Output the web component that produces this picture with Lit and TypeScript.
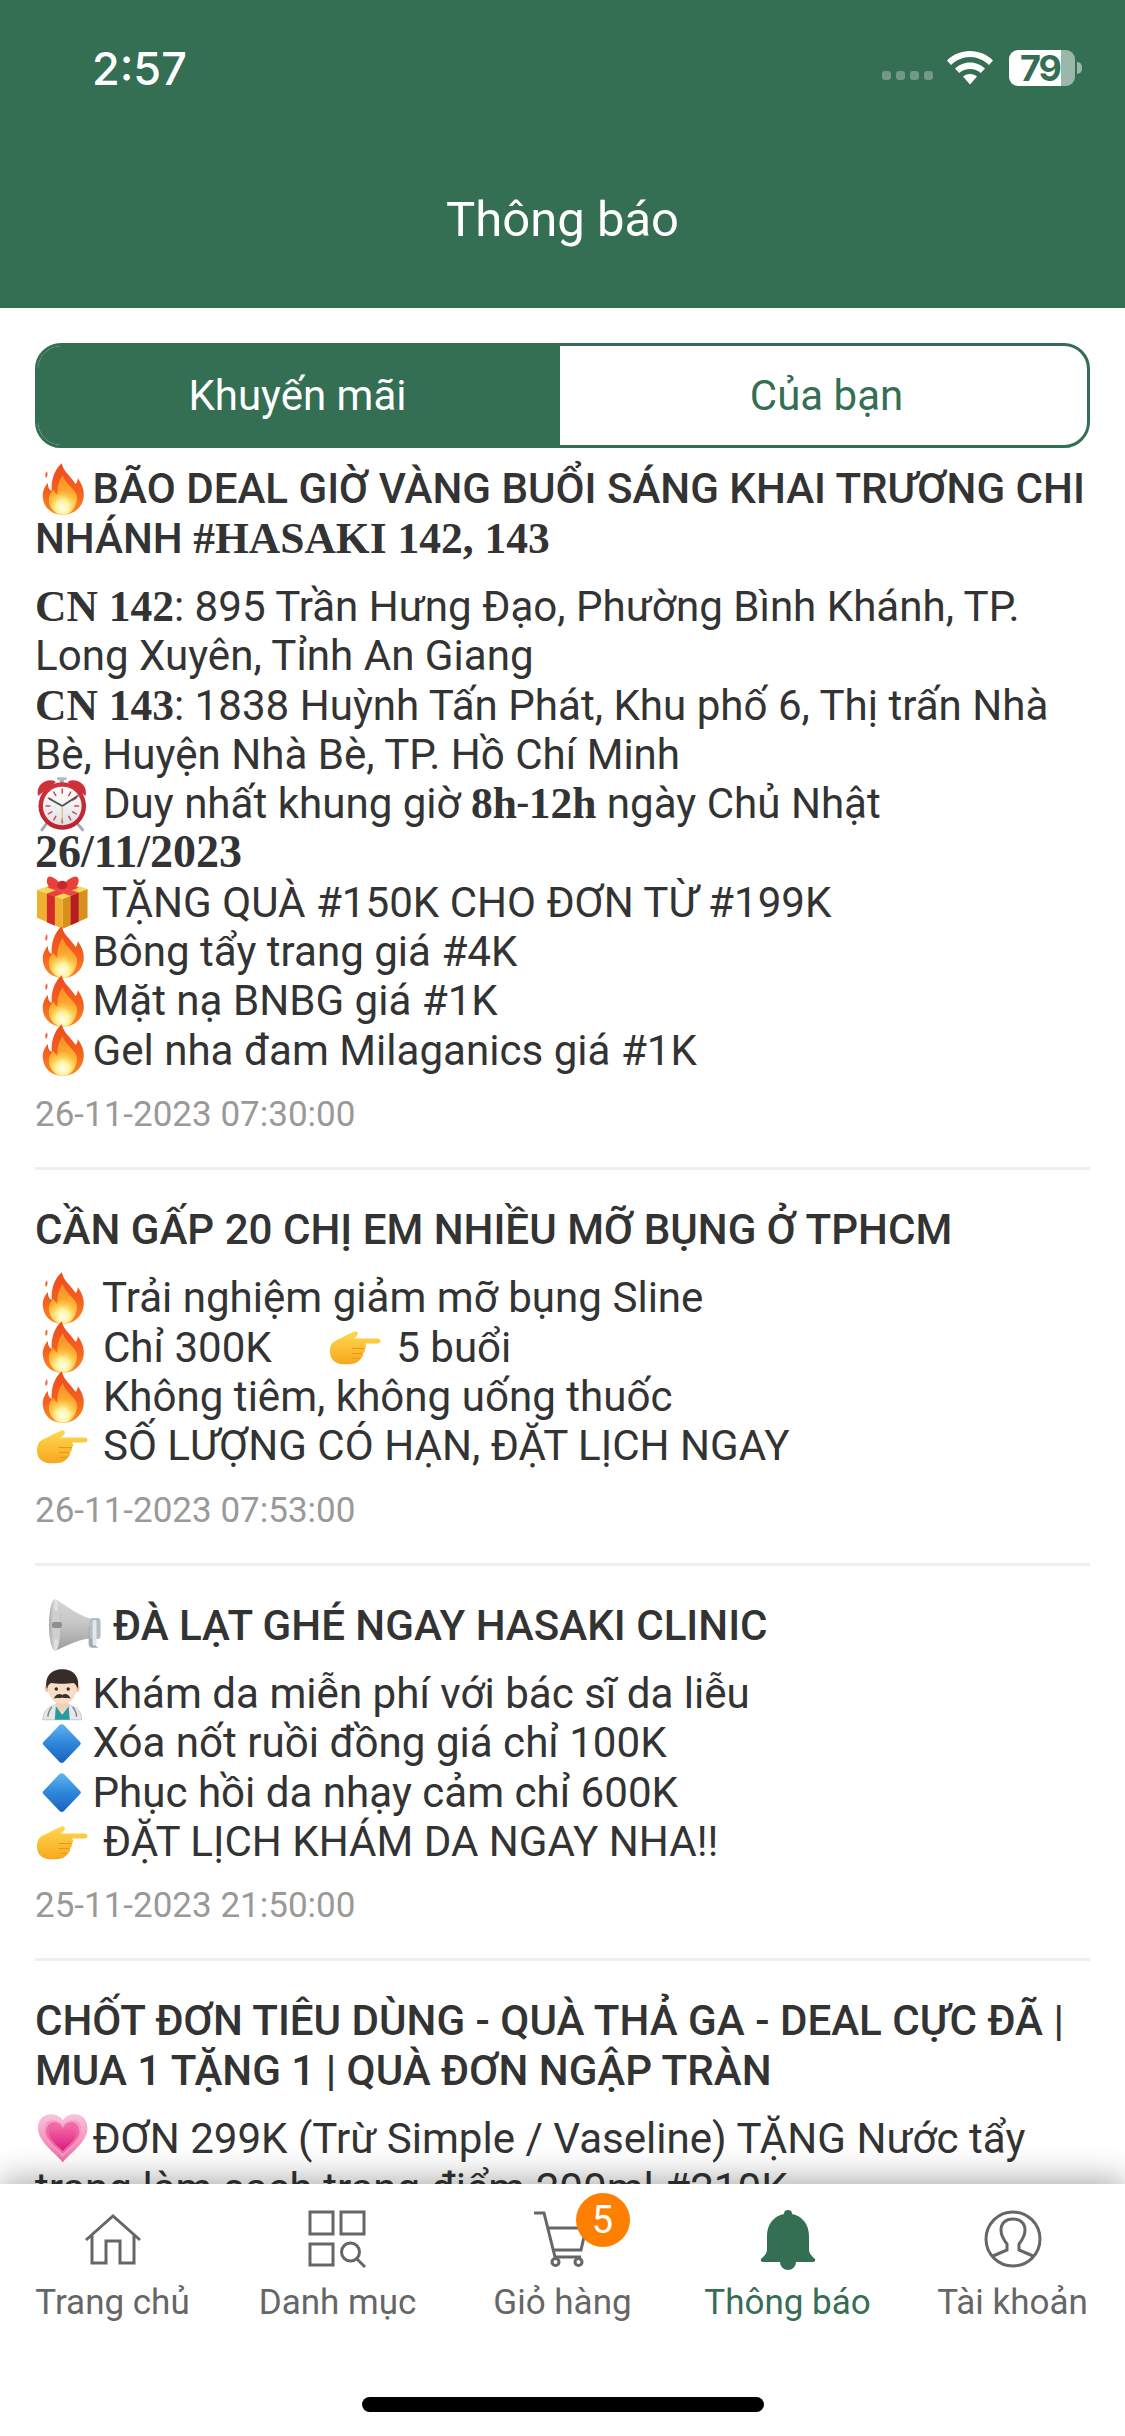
import { LitElement, html, css, svg } from 'lit';
import { customElement } from 'lit/decorators.js';

const emojiArt: Record<string, unknown> = {
  fire: svg`
    <defs>
      <linearGradient id="fa" x1="0" y1="0" x2="0" y2="1"><stop offset="0" stop-color="#ee4a1e"/><stop offset=".55" stop-color="#f4601f"/><stop offset="1" stop-color="#fb8a22"/></linearGradient>
      <linearGradient id="fb" x1="0" y1="0" x2="0" y2="1"><stop offset="0" stop-color="#f98a25"/><stop offset=".7" stop-color="#fdbb35"/><stop offset="1" stop-color="#ffe27a"/></linearGradient>
      <radialGradient id="fc" cx=".5" cy=".75" r=".6"><stop offset="0" stop-color="#fffff0"/><stop offset=".4" stop-color="#fff29a"/><stop offset="1" stop-color="#ffc43d" stop-opacity="0"/></radialGradient>
    </defs>
    <path fill="url(#fa)" d="M27 3C29 12 36 16 41 24C43 22 43 20 43 18C48 25 50 31 49 38C47 49 38 55 28 55C17 55 9 48 8 38C7 32 10 26 13 23C13 27 14 30 17 31C16 21 19 10 27 3Z"/>
    <path fill="#f0692a" d="M12 11C13 14 13 16 11 18C10 15 10 13 12 11Z"/>
    <path fill="url(#fb)" d="M28 15C30 23 38 27 42 35C44 44 37 53 28 53C20 53 14 47 14 40C14 35 16 32 19 30C20 33 21 34 23 35C22 27 24 21 28 15Z"/>
    <ellipse cx="28" cy="40" rx="14" ry="15" fill="url(#fc)"/>`,
  clock: svg`
    <defs>
      <radialGradient id="ca" cx=".5" cy=".4" r=".6"><stop offset="0" stop-color="#e8535a"/><stop offset="1" stop-color="#b81f2c"/></radialGradient>
      <linearGradient id="cb" x1="0" y1="0" x2="0" y2="1"><stop offset="0" stop-color="#fff"/><stop offset="1" stop-color="#dfe1e4"/></linearGradient>
    </defs>
    <path d="M13 47L7 55M41 47L48 55" stroke="#a5a8ac" stroke-width="3" stroke-linecap="round"/>
    <path d="M27 4V10" stroke="#a5a8ac" stroke-width="4"/>
    <rect x="22" y="2" width="10" height="3" rx="1.500" fill="#b5b8bc"/>
    <path fill="#d22f3b" d="M3 21C1 12 7 5 16 5C19 5 20 6 21 7Z"/>
    <path fill="#d22f3b" d="M51 21C53 12 47 5 38 5C35 5 34 6 33 7Z"/>
    <circle cx="27.500" cy="31" r="24" fill="url(#ca)"/>
    <circle cx="27.500" cy="31" r="19.500" fill="url(#cb)"/>
    <g stroke="#dd4a55" stroke-width="1.600" stroke-linecap="round">
      <path d="M27.500 14V18M27.500 44V48M11 31H15M40 31H44M19 17L21 20.500M36 17L34 20.500M13.500 23L17 25M41.500 23L38 25M13.500 39L17 37M41.500 39L38 37M19 45L21 41.500M36 45L34 41.500"/>
    </g>
    <path d="M27.500 31L15 24M27.500 31L43 21" stroke="#4b4e55" stroke-width="1.800" stroke-linecap="round"/>
    <path d="M27.500 31V46" stroke="#d9b56a" stroke-width="1"/>`,
  gift: svg`
    <path fill="#f9d65a" d="M2 17L28 8L53 16L28 26Z"/>
    <path fill="#eeb030" d="M2 17L28 26V56L2 45Z"/>
    <path fill="#d8901a" d="M28 26L53 16V45L28 56Z"/>
    <path fill="#d42a2c" d="M12 20.500L20 23.500V53L12 49.500Z"/>
    <path fill="#b71c24" d="M36 23L44 19.500V49L36 52.500Z"/>
    <path fill="#e5403a" d="M12 20.500L20 23.500L44 14.500L36 11.500Z"/>
    <path fill="#ea4a42" d="M36 23L44 19.500L20 11L12 14Z"/>
    <path fill="#e8413b" d="M26 11C21 5 15 2 13 4C11 7 12 12 15 14C19 16 23 15 27 13ZM29 11C34 5 41 2 43 4C45 7 44 12 41 14C37 16 33 15 29 13Z"/>
    <ellipse cx="27.500" cy="12" rx="5" ry="4.500" fill="#c9272d"/>`,
  hand: svg`
    <defs><linearGradient id="ha" x1="0" y1="0" x2="0" y2="1"><stop offset="0" stop-color="#ffd84f"/><stop offset="1" stop-color="#f6a81f"/></linearGradient></defs>
    <g transform="translate(0 2.500)">
      <path fill="url(#ha)" d="M2 31C2 24 5 21 10 19C16 16 21 13 26 11C29 10 31 12 30 14C29 16 27 17 26 18H50C54 18 54 23 50 23H37C39 24 39 27 37 28C38 30 37 32 35 33C36 35 35 37 33 38C31 42 27 44 18 44C8 44 2 40 2 31Z"/>
      <path d="M24 28H37M24 33H35M25 38H33" stroke="#e6951a" stroke-width="1" fill="none"/>
    </g>`,
  megaphone: svg`
    <defs>
      <linearGradient id="ma" x1="0" y1="0" x2="0" y2="1"><stop offset="0" stop-color="#d4d4d4"/><stop offset=".45" stop-color="#c8c8c8"/><stop offset="1" stop-color="#9c9c9c"/></linearGradient>
      <linearGradient id="mb" x1="0" y1="0" x2="1" y2="0"><stop offset="0" stop-color="#a9a9a9"/><stop offset=".6" stop-color="#e6e6e6"/><stop offset="1" stop-color="#bdbdbd"/></linearGradient>
    </defs>
    <path fill="url(#ma)" d="M10 3C16 5 30 18 47 23V42C30 44 16 53 10 55Z"/>
    <ellipse cx="10" cy="29" rx="6" ry="26" fill="url(#mb)"/>
    <ellipse cx="11" cy="29" rx="4" ry="15" fill="#cfcfcf"/>
    <rect x="7" y="26" width="10" height="6" rx="2" fill="#8f8f8f"/>
    <path d="M44 30H51V48C51 50 52 51 54 52H47C45 52 44 50 44 48Z" fill="#a4a9ae"/>
    <rect x="45" y="22" width="11" height="21" rx="3" fill="#b4bcc4"/>
    <rect x="48" y="24" width="4" height="26" rx="2" fill="#e2e8ed"/>`,
  doctor: svg`
    <path fill="#e6e8ea" stroke="#c4c8cc" stroke-width="1" d="M8 55C8 47 12 43 20 40H35C43 43 47 47 47 55Z"/>
    <path fill="#2a9aa3" d="M21 41L27.500 50L34 41L35 55H20Z"/>
    <path fill="#f3cfb4" d="M21 34H34V41L27.500 48L21 41Z"/>
    <path d="M17 42C14 46 13 49 13 52M38 42C41 46 42 49 42 52" stroke="#7f868d" stroke-width="1.500" fill="none"/>
    <ellipse cx="12.500" cy="23" rx="2.500" ry="4" fill="#efc3a6"/>
    <ellipse cx="42.500" cy="23" rx="2.500" ry="4" fill="#efc3a6"/>
    <ellipse cx="27.500" cy="23" rx="14.500" ry="16" fill="#f9dcc6"/>
    <path fill="#372c29" d="M12 24C9 11 17 4 27.500 4C38 4 46 11 43 24C42 21 41 19 39 18C32 19 23 19 16 18C14 19 13 21 12 24Z"/>
    <circle cx="21.500" cy="24" r="1.700" fill="#332a28"/>
    <circle cx="33.500" cy="24" r="1.700" fill="#332a28"/>
    <path fill="#3f302b" d="M27.500 30C25 28 21 29 19 33.500C23 32.500 26 33.500 27.500 32.500C29 33.500 32 32.500 36 33.500C34 29 30 28 27.500 30Z"/>`,
  diamond: svg`
    <defs><linearGradient id="da" x1="0" y1="0" x2="0" y2="1"><stop offset="0" stop-color="#5fb4f1"/><stop offset=".5" stop-color="#2e86da"/><stop offset="1" stop-color="#1c62bf"/></linearGradient></defs>
    <path transform="translate(-2 0.500)" fill="url(#da)" d="M27 10Q27.500 9.500 29 9.500Q30.500 9.500 31 10L47.500 27.500Q49 29 47.500 30.500L31 48Q29 49.500 27 48L10.500 30.500Q9 29 10.500 27.500Z"/>`,
  heart: svg`
    <defs>
      <linearGradient id="ea" x1="0" y1="0" x2="0" y2="1"><stop offset="0" stop-color="#f9c3da"/><stop offset="1" stop-color="#f06fa8"/></linearGradient>
      <linearGradient id="eb" x1="0" y1="0" x2="0" y2="1"><stop offset="0" stop-color="#f66ba7"/><stop offset="1" stop-color="#d91c7d"/></linearGradient>
    </defs>
    <path fill="url(#ea)" d="M28 53C24 46 3 33 3 18C3 9 9 4 16 4C21 4 25 6 28 10C31 6 35 4 40 4C47 4 53 9 53 18C53 33 32 46 28 53Z"/>
    <path fill="#f79cc4" d="M28 47C22 40 9 31 9 20C9 13 13 10 18 10C22 10 26 12 28 16C30 12 34 10 38 10C43 10 47 13 47 20C47 31 34 40 28 47Z"/>
    <path fill="#ee6aa6" d="M28 44C22 38 11 30 11 22C11 16 15 12 19 12C23 12 26 14 28 18C30 14 33 12 37 12C41 12 45 16 45 22C45 30 34 38 28 44Z"/>
    <path fill="url(#eb)" d="M28 41C22 35 14 29 14 23C14 18 17 15 21 15C24 15 26 17 28 20C30 17 32 15 35 15C39 15 42 18 42 23C42 29 34 35 28 41Z"/>`,
};

const emoji = (name: string) => html`<svg class="emoji" viewBox="0 0 58 58">${emojiArt[name]}</svg>`;

const serif = (text: string) => html`<b class="serif">${text}</b>`;

const items = [
  {
    title: html`${emoji('fire')}BÃO DEAL GIỜ VÀNG BUỔI SÁNG KHAI TRƯƠNG CHI NHÁNH ${serif('#HASAKI 142, 143')}`,
    lines: [
      html`${serif('CN 142')}: 895 Trần Hưng Đạo, Phường Bình Khánh, TP. Long Xuyên, Tỉnh An Giang`,
      html`${serif('CN 143')}: 1838 Huỳnh Tấn Phát, Khu phố 6, Thị trấn Nhà Bè, Huyện Nhà Bè, TP. Hồ Chí Minh`,
      html`${emoji('clock')} Duy nhất khung giờ ${serif('8h')}-${serif('12h')} ngày Chủ Nhật <b class="serif day">26/11/2023</b>`,
      html`${emoji('gift')} TẶNG QUÀ #150K CHO ĐƠN TỪ #199K`,
      html`${emoji('fire')}Bông tẩy trang giá #4K`,
      html`${emoji('fire')}Mặt nạ BNBG giá #1K`,
      html`${emoji('fire')}Gel nha đam Milaganics giá #1K`,
    ],
    date: '26-11-2023 07:30:00',
  },
  {
    title: html`CẦN GẤP 20 CHỊ EM NHIỀU MỠ BỤNG Ở TPHCM`,
    lines: [
      html`${emoji('fire')} Trải nghiệm giảm mỡ bụng Sline`,
      html`${emoji('fire')} Chỉ 300K <span class="wide"></span>${emoji('hand')} 5 buổi`,
      html`${emoji('fire')} Không tiêm, không uống thuốc`,
      html`${emoji('hand')} SỐ LƯỢNG CÓ HẠN, ĐẶT LỊCH NGAY`,
    ],
    date: '26-11-2023 07:53:00',
  },
  {
    title: html`<span class="lead"></span>${emoji('megaphone')} ĐÀ LẠT GHÉ NGAY HASAKI CLINIC`,
    lines: [
      html`${emoji('doctor')}Khám da miễn phí với bác sĩ da liễu`,
      html`${emoji('diamond')}Xóa nốt ruồi đồng giá chỉ 100K`,
      html`${emoji('diamond')}Phục hồi da nhạy cảm chỉ 600K`,
      html`${emoji('hand')} ĐẶT LỊCH KHÁM DA NGAY NHA!!`,
    ],
    date: '25-11-2023 21:50:00',
  },
  {
    title: html`CHỐT ĐƠN TIÊU DÙNG - QUÀ THẢ GA - DEAL CỰC ĐÃ | MUA 1 TẶNG 1 | QUÀ ĐƠN NGẬP TRÀN`,
    lines: [
      html`${emoji('heart')}ĐƠN 299K (Trừ Simple / Vaseline) TẶNG Nước tẩy trang làm sạch trang điểm 200ml #210K`,
    ],
    date: '',
  },
];

const navIcons: Record<string, unknown> = {
  home: svg`<path d="M3 31L30 7L57 31M9 26V54H23V32H37V54H51V26"/>`,
  grid: svg`<path d="M2 3H25V25H2ZM33 3H56V25H33ZM2 35H25V56H2Z"/><circle cx="42.500" cy="43" r="9"/><path d="M49 50L57 58"/>`,
  cart: svg`<path d="M1 4H11L22 48H48M14 19H53L48 41H20"/><circle cx="22.500" cy="53" r="3.500"/><circle cx="45.500" cy="53" r="3.500"/>`,
  bell: svg`<path class="solid" d="M30 1A4 4 0 0 1 34 5C44 7 51 15 51 27V40C51 45 54 47 57 50Q58 53 55 53H38A8 8 0 0 1 22 53H5Q2 53 3 50C6 47 9 45 9 40V27C9 15 16 7 26 5A4 4 0 0 1 30 1Z"/>`,
  user: svg`<circle cx="30" cy="30" r="27"/><path d="M10 47L24 41V35C20 30 18 26 18 21C18 14 23 10 30 10C37 10 42 14 42 21C42 26 40 30 36 35V41L50 47"/>`,
};

const navItems = [
  { icon: 'home', label: 'Trang chủ' },
  { icon: 'grid', label: 'Danh mục' },
  { icon: 'cart', label: 'Giỏ hàng', badge: 5 },
  { icon: 'bell', label: 'Thông báo', active: true },
  { icon: 'user', label: 'Tài khoản' },
];

@customElement('app-root')
export class AppRoot extends LitElement {
  static styles = css`
    :host {
      display: block;
      font-family: Roboto, "Noto Sans", sans-serif;
      color: #333;
    }

    .page {
      width: 1125px;
      height: 2436px;
      display: flex;
      flex-direction: column;
      overflow: hidden;
      background: #fff;
    }

    .header {
      height: 308px;
      flex: none;
      box-sizing: border-box;
      background: #346e53;
      color: #fff;
    }
    .status {
      height: 52px;
      padding: 42px 43px 0 92px;
      display: flex;
      align-items: center;
    }
    .time {
      font-family: Inter, sans-serif;
      font-size: 45px;
      font-weight: 500;
      flex: 1;
    }
    .dots {
      display: flex;
      gap: 5px;
      margin: 14px 14px 0 0;
    }
    .dots i {
      width: 9px;
      height: 9px;
      border-radius: 3px;
      background: rgba(255, 255, 255, 0.3);
    }
    .wifi {
      width: 46px;
      height: 34px;
      margin-right: 16px;
    }
    .battery {
      position: relative;
      width: 66px;
      height: 36px;
      border-radius: 9px;
      background: linear-gradient(90deg, #fff 79%, rgba(255, 255, 255, 0.5) 79%);
      color: #346e53;
      font-family: Inter, sans-serif;
      font-size: 36px;
      font-weight: 700;
      letter-spacing: -2px;
      line-height: 36px;
      padding-left: 11px;
      box-sizing: border-box;
      margin-right: 7px;
    }
    .battery::after {
      content: "";
      position: absolute;
      right: -7px;
      top: 12px;
      width: 5px;
      height: 12px;
      border-radius: 0 6px 6px 0;
      background: rgba(255, 255, 255, 0.5);
    }
    .heading {
      margin-top: 96px;
      text-align: center;
      font-size: 49px;
      line-height: 60px;
    }

    .content {
      flex: 1;
      min-height: 0;
      overflow: hidden;
      padding: 35px 35px 0 35px;
    }

    .tabs {
      display: flex;
      height: 105px;
      box-sizing: border-box;
      border: 3px solid #346e53;
      border-radius: 26px;
      overflow: hidden;
      font-size: 42px;
    }
    .tab {
      flex: 1;
      display: flex;
      align-items: center;
      justify-content: center;
      padding-left: 6px;
      color: #346e53;
    }
    .tab.on {
      flex: 0 0 522px;
      box-sizing: border-box;
      padding: 0 3px 0 0;
      background: #346e53;
      color: #fff;
    }

    .item {
      padding: 35px 0 31px;
      border-bottom: 3px solid #eee;
    }
    .tabs + .item {
      padding-top: 16px;
    }
    .title {
      font-size: 42.1px;
      font-weight: 500;
      line-height: 49.5px;
    }
    .body {
      margin-top: 19px;
      font-size: 42.1px;
      line-height: 49.3px;
    }
    .date {
      margin-top: 19px;
      font-size: 35px;
      line-height: 42px;
      color: #999;
    }
    .serif {
      font-family: "Liberation Serif", serif;
      font-weight: 700;
      font-size: 43.5px;
      line-height: 1;
    }
    .serif.day {
      font-size: 46px;
    }
    .emoji {
      width: 57.5px;
      height: 58px;
      margin: -4.5px 0;
      vertical-align: top;
    }
    .wide {
      display: inline-block;
      width: 46px;
    }
    .lead {
      display: inline-block;
      width: 10px;
    }

    .nav {
      position: relative;
      flex: none;
      height: 252px;
      box-sizing: border-box;
      padding-top: 25px;
      background: #fff;
      box-shadow: 0 -5px 30px rgba(0, 0, 0, 0.32);
    }
    .nav-row {
      display: grid;
      grid-template-columns: repeat(5, 1fr);
    }
    .nav-item {
      display: flex;
      flex-direction: column;
      align-items: center;
      gap: 14px;
      color: #666;
      font-size: 35px;
      line-height: 40px;
    }
    .nav-item.active {
      color: #346e53;
    }
    .nav-icon {
      position: relative;
      width: 60px;
      height: 60px;
    }
    .nav-icon svg {
      display: block;
      width: 60px;
      height: 60px;
      overflow: visible;
      fill: none;
      stroke: #666;
      stroke-width: 3;
    }
    .nav-icon .solid {
      fill: #346e53;
      stroke: none;
    }
    .badge {
      position: absolute;
      left: 43px;
      top: -16px;
      width: 54px;
      height: 54px;
      border-radius: 50%;
      background: #ff8000;
      color: #fff;
      font-size: 38px;
      line-height: 54px;
      text-align: center;
    }
    .home-bar {
      width: 402px;
      height: 15px;
      margin: 74px auto 0;
      border-radius: 8px;
      background: #000;
    }
  `;

  render() {
    return html`
      <div class="page">
        <div class="header">
          <div class="status">
            <span class="time">2:57</span>
            <span class="dots"><i></i><i></i><i></i><i></i></span>
            <svg class="wifi" viewBox="0 0 46 34" fill="#fff">
              <path d="M23 0C14 0 6 3.500 0 9.500L4 14C9 9 16 6 23 6C30 6 37 9 42 14L46 9.500C40 3.500 32 0 23 0Z"/>
              <path d="M23 11.500C17 11.500 12 14 8 17.500L12.200 22C15 19.500 19 18 23 18C27 18 31 19.500 33.800 22L38 17.500C34 14 29 11.500 23 11.500Z"/>
              <path d="M23 23C20 23 18 24 16 25.500L23 33.500L30 25.500C28 24 26 23 23 23Z"/>
            </svg>
            <span class="battery">79</span>
          </div>
          <div class="heading">Thông báo</div>
        </div>

        <div class="content">
          <div class="tabs">
            <div class="tab on">Khuyến mãi</div>
            <div class="tab">Của bạn</div>
          </div>
          ${items.map(
            (it) => html`
              <div class="item">
                <div class="title">${it.title}</div>
                <div class="body">${it.lines.map((l) => html`<div>${l}</div>`)}</div>
                ${it.date ? html`<div class="date">${it.date}</div>` : ''}
              </div>
            `
          )}
        </div>

        <div class="nav">
          <div class="nav-row">
            ${navItems.map(
              (n) => html`
                <div class="nav-item ${n.active ? 'active' : ''}">
                  <div class="nav-icon">
                    <svg viewBox="0 0 60 60">${navIcons[n.icon]}</svg>
                    ${n.badge ? html`<span class="badge">${n.badge}</span>` : ''}
                  </div>
                  <span>${n.label}</span>
                </div>
              `
            )}
          </div>
          <div class="home-bar"></div>
        </div>
      </div>
    `;
  }
}
